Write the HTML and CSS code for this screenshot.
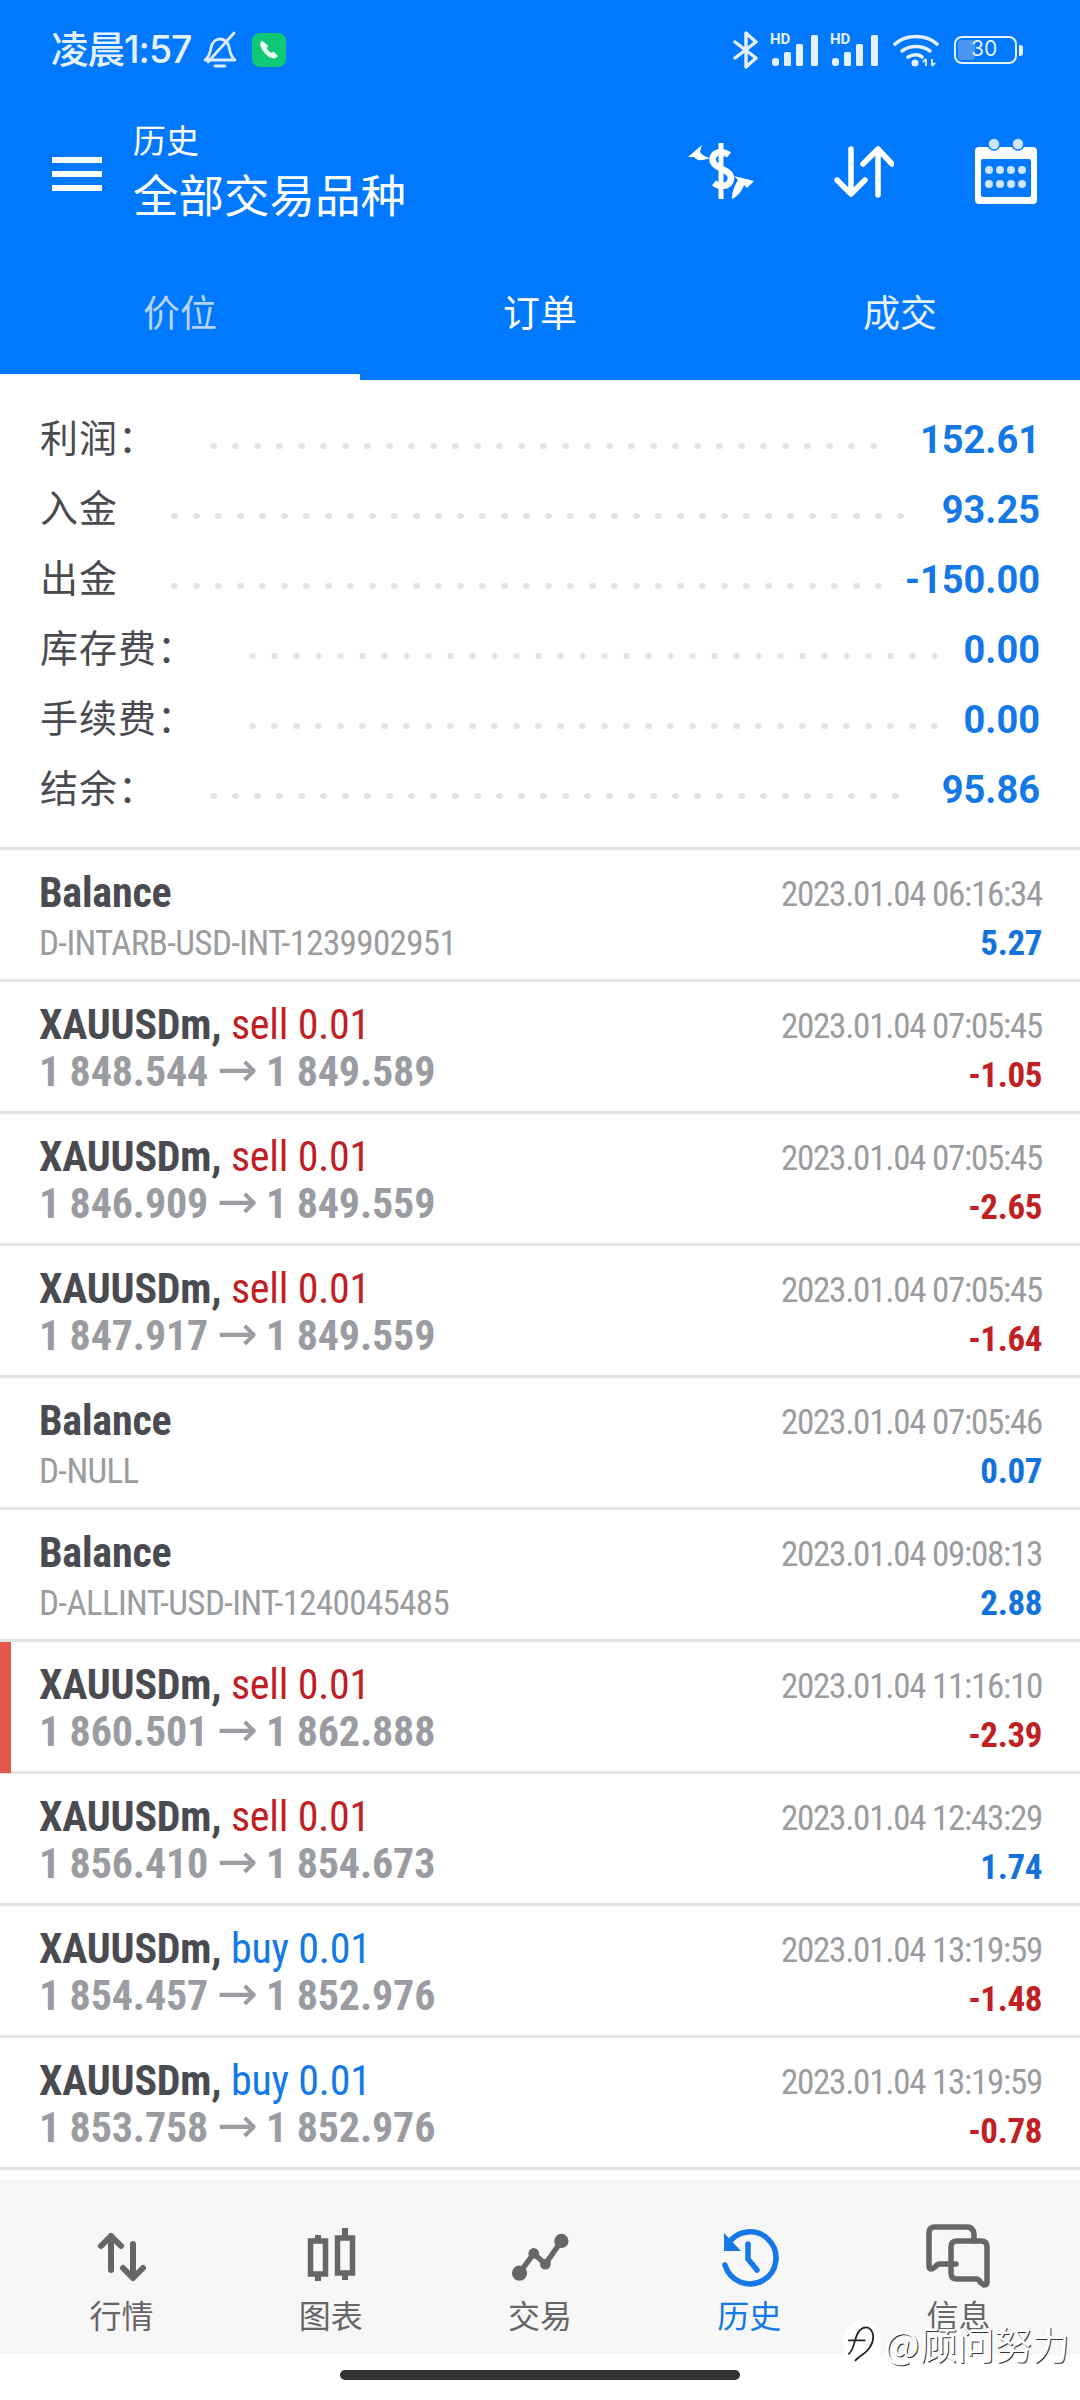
FILE: index.html
```html
<!DOCTYPE html>
<html lang="zh">
<head>
<meta charset="utf-8">
<title>历史</title>
<link rel="stylesheet" href="styles.css">
</head>
<body>
<div class="app">
  <header class="top">
    <div class="status">
      <div class="status-left">
        <span class="clock">凌晨1:57</span>
        <svg class="bell" viewBox="0 0 34 38"><g fill="none" stroke="#dbeaff" stroke-width="2.8" stroke-linecap="round" stroke-linejoin="round"><path d="M2 29c4-3 5-6 6-12 1-6 5-9 9-9s8 3 9 8c1 6 2 10 6 13z"/><path d="M5 31 31 2"/><path d="M12 35h10"/></g></svg>
        <span class="call"><svg viewBox="0 0 34 34"><path d="M10 8.500c-1.500 1-1.500 3 0 6.500 2 4 5 7 9 9 3 1.200 5 .8 6-1l-3.500-3.500-2.500 1.200c-2-1-4-3-5-5.500l1.300-2.200z" fill="#e8fff4" stroke="#e8fff4" stroke-width="1.400" stroke-linejoin="round"/></svg></span>
      </div>
      <div class="status-right">
        <svg class="bt" viewBox="0 0 26 38"><path d="M2 11l21 16-10 9V2l10 9L2 27" fill="none" stroke="#e6f1ff" stroke-width="3.400" stroke-linejoin="round" stroke-linecap="round"/></svg>
        <span class="sig"><span class="hd">HD</span><svg viewBox="0 0 50 32"><g fill="#e6f1ff"><rect x="2" y="24" width="7" height="8" rx="3"/><rect x="14" y="18" width="7" height="14" rx="1.500"/><rect x="26" y="10" width="7" height="22" rx="1.500"/><rect x="41" y="1" width="7" height="31" rx="1.500"/></g></svg></span>
        <span class="sig"><span class="hd">HD</span><svg viewBox="0 0 50 32"><g fill="#e6f1ff"><rect x="2" y="24" width="7" height="8" rx="3"/><rect x="14" y="18" width="7" height="14" rx="1.500"/><rect x="26" y="10" width="7" height="22" rx="1.500"/><rect x="41" y="1" width="7" height="31" rx="1.500"/></g></svg></span>
        <svg class="wifi" viewBox="0 0 46 34"><g fill="none" stroke="#e6f1ff" stroke-width="3.600" stroke-linecap="round"><path d="M2 11C13 1 33 1 44 11"/><path d="M9 18c8-6 20-6 28 0"/><path d="M15 24c5-3 11-3 14 0" /></g><circle cx="22" cy="30" r="3.500" fill="#e6f1ff"/><path d="M33 33v-7m-3 3 3-3M39 26v7m3-3-3 3" fill="none" stroke="#e6f1ff" stroke-width="1.800"/></svg>
        <span class="battery"><span class="battery-fill"></span><span class="battery-num">30</span></span><span class="battery-nub"></span>
      </div>
    </div>
    <div class="bar">
      <svg class="menu" viewBox="0 0 50 34"><g fill="#fff"><rect width="50" height="6"/><rect y="14" width="50" height="6"/><rect y="28" width="50" height="6"/></g></svg>
      <div class="titles">
        <div class="sup">历史</div>
        <div class="title">全部交易品种</div>
      </div>
      <div class="actions">
        <svg class="act-dollar" viewBox="0 0 66 56"><g fill="none" stroke="#fff"><path d="M33 1v54" stroke-width="5" stroke-linecap="round"/><path d="M41 12c-5-4-14-4-16 2-2 6 3 9 9 12 7 3 11 7 8 13-3 5-11 5-16 1" stroke-width="6.500"/></g><path d="M0 14 14 2l-2 7c2 3 5 5 10 6-8 3-13 3-16-1z" fill="#fff"/><path d="M66 38 46 33l4 4c-3 5-6 11-6 19 6-3 10-8 12-14l3 3z" fill="#fff"/></svg>
        <svg class="act-arrows" viewBox="0 0 60 52"><g fill="none" stroke="#fff" stroke-width="5.500" stroke-linecap="round" stroke-linejoin="round"><path d="M17 3v45M3 34l14 14 14-14"/><path d="M44 49V4M29 18 44 3l14 15"/></g></svg>
        <svg class="act-cal" viewBox="0 0 64 66"><path d="M5 9h54a4 4 0 0 1 4 4v49a4 4 0 0 1-4 4H5a4 4 0 0 1-4-4V13a4 4 0 0 1 4-4z" fill="#fff"/><rect x="7" y="21" width="50" height="38" rx="2" fill="#0079ff"/><circle cx="20" cy="6" r="6" fill="#cfe4ff" stroke="#0079ff" stroke-width="1.500"/><circle cx="44" cy="6" r="6" fill="#cfe4ff" stroke="#0079ff" stroke-width="1.500"/><g fill="#cfe4ff"><circle cx="15" cy="32" r="4"/><circle cx="26" cy="32" r="4"/><circle cx="37" cy="32" r="4"/><circle cx="48" cy="32" r="4"/><circle cx="15" cy="46" r="4"/><circle cx="26" cy="46" r="4"/><circle cx="37" cy="46" r="4"/><circle cx="48" cy="46" r="4"/></g></svg>
      </div>
    </div>
    <nav class="tabs">
      <div class="tab tab-on">价位</div>
      <div class="tab tab-order">订单</div>
      <div class="tab">成交</div>
    </nav>
  </header>

  <section class="summary">
    <div class="sum-row"><span class="sum-label">利润：</span><span class="dots colon" style="--n:31"></span><span class="sum-val">152.61</span></div>
    <div class="sum-row"><span class="sum-label">入金</span><span class="dots" style="--n:34"></span><span class="sum-val">93.25</span></div>
    <div class="sum-row"><span class="sum-label">出金</span><span class="dots" style="--n:33"></span><span class="sum-val">-150.00</span></div>
    <div class="sum-row"><span class="sum-label">库存费：</span><span class="dots colon" style="--n:32"></span><span class="sum-val">0.00</span></div>
    <div class="sum-row"><span class="sum-label">手续费：</span><span class="dots colon" style="--n:32"></span><span class="sum-val">0.00</span></div>
    <div class="sum-row"><span class="sum-label">结余：</span><span class="dots colon" style="--n:32"></span><span class="sum-val">95.86</span></div>
  </section>

  <section class="list">
    <div class="row"><div class="l1 name">Balance</div><div class="r1">2023.01.04 06:16:34</div><div class="l2 sub">D-INTARB-USD-INT-1239902951</div><div class="r2 pos">5.27</div></div>
    <div class="row"><div class="l1 name">XAUUSDm, <span class="sell">sell 0.01</span></div><div class="r1">2023.01.04 07:05:45</div><div class="l2 price">1 848.544 <span class="arrow">→</span> 1 849.589</div><div class="r2 neg">-1.05</div></div>
    <div class="row"><div class="l1 name">XAUUSDm, <span class="sell">sell 0.01</span></div><div class="r1">2023.01.04 07:05:45</div><div class="l2 price">1 846.909 <span class="arrow">→</span> 1 849.559</div><div class="r2 neg">-2.65</div></div>
    <div class="row"><div class="l1 name">XAUUSDm, <span class="sell">sell 0.01</span></div><div class="r1">2023.01.04 07:05:45</div><div class="l2 price">1 847.917 <span class="arrow">→</span> 1 849.559</div><div class="r2 neg">-1.64</div></div>
    <div class="row"><div class="l1 name">Balance</div><div class="r1">2023.01.04 07:05:46</div><div class="l2 sub">D-NULL</div><div class="r2 pos">0.07</div></div>
    <div class="row"><div class="l1 name">Balance</div><div class="r1">2023.01.04 09:08:13</div><div class="l2 sub">D-ALLINT-USD-INT-1240045485</div><div class="r2 pos">2.88</div></div>
    <div class="row row-marked"><div class="l1 name">XAUUSDm, <span class="sell">sell 0.01</span></div><div class="r1">2023.01.04 11:16:10</div><div class="l2 price">1 860.501 <span class="arrow">→</span> 1 862.888</div><div class="r2 neg">-2.39</div></div>
    <div class="row"><div class="l1 name">XAUUSDm, <span class="sell">sell 0.01</span></div><div class="r1">2023.01.04 12:43:29</div><div class="l2 price">1 856.410 <span class="arrow">→</span> 1 854.673</div><div class="r2 pos">1.74</div></div>
    <div class="row"><div class="l1 name">XAUUSDm, <span class="buy">buy 0.01</span></div><div class="r1">2023.01.04 13:19:59</div><div class="l2 price">1 854.457 <span class="arrow">→</span> 1 852.976</div><div class="r2 neg">-1.48</div></div>
    <div class="row"><div class="l1 name">XAUUSDm, <span class="buy">buy 0.01</span></div><div class="r1">2023.01.04 13:19:59</div><div class="l2 price">1 853.758 <span class="arrow">→</span> 1 852.976</div><div class="r2 neg">-0.78</div></div>
  </section>

  <nav class="bottom">
    <div class="item">
      <svg class="ico" viewBox="0 0 66 66"><g fill="none" stroke="#666" stroke-width="6" stroke-linecap="round" stroke-linejoin="round"><path d="M22 46V12M12 22 22 12l10 10"/><path d="M44 20v34M34 44l10 10 10-10"/></g></svg>
      <span class="item-label">行情</span>
    </div>
    <div class="item">
      <svg class="ico" viewBox="0 0 66 66"><g fill="none" stroke="#666"><path d="M20 11v46M47 4v52" stroke-width="6"/><rect x="12.500" y="17" width="15" height="33" fill="#f7f7f7" stroke-width="5.500"/><rect x="39.500" y="14" width="15" height="35" fill="#f7f7f7" stroke-width="5.500"/></g></svg>
      <span class="item-label">图表</span>
    </div>
    <div class="item">
      <svg class="ico" viewBox="-4 -4 74 74"><path d="M10 51 26 29 39 41 57 15" fill="none" stroke="#666" stroke-width="6"/><circle cx="10" cy="51" r="8.500" fill="#666"/><circle cx="26" cy="29" r="6" fill="#666"/><circle cx="39" cy="41" r="6" fill="#666"/><circle cx="57" cy="15" r="8" fill="#666"/></svg>
      <span class="item-label">交易</span>
    </div>
    <div class="item item-on">
      <svg class="ico" viewBox="0 0 66 66"><g fill="none" stroke="#1478e6" stroke-width="5.500" stroke-linecap="round" stroke-linejoin="round"><path d="M9 41a26 26 0 1 0 3-21"/><path d="M32 20v15l9 11"/></g><path d="M8 9v18h17z" fill="#1478e6"/></svg>
      <span class="item-label">历史</span>
    </div>
    <div class="item">
      <svg class="ico" viewBox="0 0 66 66"><g fill="none" stroke="#666" stroke-width="5.500" stroke-linecap="round" stroke-linejoin="round"><path d="M31 40H15q-3 0-5 3l-3 2q-3 0-3-3V9q0-6 6-6h32q6 0 7 7v7"/><path d="M32 17h24q6 0 6 6v35q0 3-3 3l-4-3q-1-3-4-3H32q-6 0-6-6V23q0-6 6-6z"/></g></svg>
      <span class="item-label">信息</span>
    </div>
  </nav>
  <div class="home"><span class="home-bar"></span></div>

  <div class="mark">
    <span class="mark-logo"><svg viewBox="0 0 44 46"><path d="M6 36c4-2 6-8 8-16 2-8 6-15 13-15 4 0 8 4 8 11 0 9-7 17-13 21-3 2-6 4-8 7m-8-24h20" fill="none" stroke="#222" stroke-width="2"/></svg></span>
    <span class="mark-text">@顾问努力</span>
  </div>
</div>
</body>
</html>
```

FILE: styles.css
```css
* { box-sizing: border-box; margin: 0; padding: 0; }
html, body { width: 1080px; height: 2400px; background: #fff; }
body { font-family: "Noto Sans CJK SC", "Noto Sans", sans-serif; overflow: hidden; }
.app { position: relative; width: 1080px; height: 2400px; display: flex; flex-direction: column; }

.top { background: #0079ff; height: 380px; color: #fff; display: flex; flex-direction: column; flex: none; }
.status { height: 102px; padding: 30px 0 0 51px; display: flex; justify-content: space-between; align-items: flex-start; }
.status-left { display: flex; align-items: center; height: 40px; }
.clock { font: 500 37.500px/40px "Inter", "Noto Sans CJK SC", sans-serif; color: #e6f1ff; letter-spacing: -1px; white-space: nowrap; width: 152px; }
.bell { width: 34px; height: 38px; }
.call { width: 34px; height: 34px; margin-left: 15px; background: #10c974; border-radius: 8px; display: block; }
.call svg { display: block; width: 34px; height: 34px; }
.status-right { display: flex; align-items: center; padding-right: 57px; height: 40px; }
.bt { width: 26px; height: 38px; }
.sig { position: relative; display: block; width: 50px; height: 32px; margin-left: 10px; }
.bt + .sig { margin-left: 11px; }
.sig svg { position: absolute; left: 0; top: 0; width: 50px; height: 32px; }
.hd { position: absolute; left: 0; top: -2px; font: 700 15px/15px "Roboto", sans-serif; color: #e6f1ff; }
.wifi { width: 46px; height: 34px; margin-left: 13px; }
.battery { position: relative; display: block; width: 63px; height: 28px; margin-left: 15px; border: 2.5px solid #e6f1ff; border-radius: 8px; overflow: hidden; }
.battery-fill { position: absolute; left: 2px; top: 2px; bottom: 2px; width: 17px; background: #4b95f5; border-radius: 3px; }
.battery-num { position: absolute; left: 15px; top: -1px; font: 400 21px/24px "Inter", sans-serif; color: #e6f1ff; }
.battery-nub { display: block; width: 4px; height: 11px; margin-left: 2px; background: #e6f1ff; border-radius: 0 3px 3px 0; }

.bar { height: 145px; padding-left: 52px; display: flex; align-items: center; border-bottom: 1px solid #0274f3; position: relative; }
.menu { width: 50px; height: 34px; margin-top: -1px; flex: none; }
.titles { margin-left: 31px; color: #fff; display: flex; flex-direction: column; margin-top: -4px; }
.sup { font-size: 33px; line-height: 42px; }
.title { font-size: 45.500px; line-height: 66px; white-space: nowrap; }
.actions { margin-left: auto; position: relative; width: 400px; height: 100%; }
.actions svg { position: absolute; }
.act-dollar { left: 8px; top: 41px; width: 66px; height: 56px; }
.act-arrows { left: 154px; top: 44px; width: 60px; height: 52px; }
.act-cal { left: 294px; top: 36px; width: 64px; height: 66px; }

.tabs { height: 133px; display: grid; grid-template-columns: repeat(3, 360px); }
.tab { position: relative; display: flex; align-items: center; justify-content: center; font-size: 37px; padding-bottom: 6px; color: #e6f1ff; }
.tab-on { color: #b4d4fb; }
.tab-on::after { content: ""; position: absolute; left: 0; right: 0; bottom: 0; height: 6px; background: #fff; }
.tab-order { color: #fff; }

.summary { flex: none; height: 470px; padding: 23px 40px 0; border-bottom: 3px solid #e4e4e4; }
.sum-row { height: 70px; display: flex; align-items: center; }
.sum-label { flex: none; width: 72px; font-size: 38px; line-height: 50px; margin-top: -4px; letter-spacing: 1px; color: #4a4b50; white-space: nowrap; }
.dots { flex: none; height: 8px; margin-top: 16px; margin-left: 59px; width: calc(var(--n) * 22px); background: radial-gradient(circle at 3.500px 4px, #e4e4e4 3px, transparent 3.600px) 0 0 / 22px 8px repeat-x; }
.colon { margin-left: 98px; }
.sum-row:nth-child(4) .colon, .sum-row:nth-child(5) .colon { margin-left: 137px; }
.sum-val { margin-left: auto; font: 700 38px/44px "Roboto", sans-serif; margin-top: 3px; color: #1478e6; }

.list { flex: none; font-family: "Roboto", sans-serif; }
.row { position: relative; height: 132px; border-bottom: 3px solid #e4e4e4; padding: 18px 38px 0 39px; display: grid; grid-template-columns: 1fr auto; grid-template-rows: 48px 50px; align-items: center; font-stretch: 75%; }
.name { font-size: 42px; font-weight: 700; letter-spacing: -.2px; color: #4a4b51; white-space: nowrap; }
.sell { font-weight: 400; color: #c01f24; }
.buy { font-weight: 400; color: #1478e6; }
.sub { font-size: 35px; letter-spacing: -.63px; padding-top: 4px; color: #9a9ca0; white-space: nowrap; }
.price { font-size: 42px; font-weight: 700; letter-spacing: -.15px; margin-top: -4px; color: #9a9ca2; white-space: nowrap; }
.arrow { font: 400 49px/40px "DejaVu Sans", sans-serif; margin: 0 -1px; }
.r1 { font-size: 35px; letter-spacing: -1.25px; padding-top: 5px; color: #9a9ca0; text-align: right; white-space: nowrap; }
.r2 { font-size: 35px; font-weight: 700; letter-spacing: -.4px; padding-top: 4px; text-align: right; }
.pos { color: #1473db; }
.neg { color: #c01f24; }
.row-marked::before { content: ""; position: absolute; left: 0; top: 0; bottom: -2px; width: 11px; background: #e4564b; }

.bottom { flex: none; margin-top: 10px; height: 175px; background: #f7f7f7; padding: 0 17px; display: grid; grid-template-columns: repeat(5, 1fr); }
.item { display: flex; flex-direction: column; align-items: center; padding-top: 44px; color: #666; }
.ico { width: 66px; height: 66px; }
.item-label { font-size: 32px; line-height: 44px; margin-top: 2px; }
.item-on { color: #1478e6; }
.home { flex: none; height: 45px; padding-top: 15px; display: flex; justify-content: center; }
.home-bar { display: block; width: 400px; height: 10px; border-radius: 5px; background: #333; }

.mark { position: absolute; left: 843px; top: 2320px; display: flex; align-items: center; height: 46px; }
.mark-logo { display: block; width: 38px; height: 46px; border-radius: 50%; background: #fff; }
.mark-logo svg { display: block; width: 38px; height: 46px; }
.mark-text { margin-left: 3px; font-size: 37.500px; line-height: 46px; color: #fff; text-shadow: 1px 1px 0 #333; white-space: nowrap; }
```
